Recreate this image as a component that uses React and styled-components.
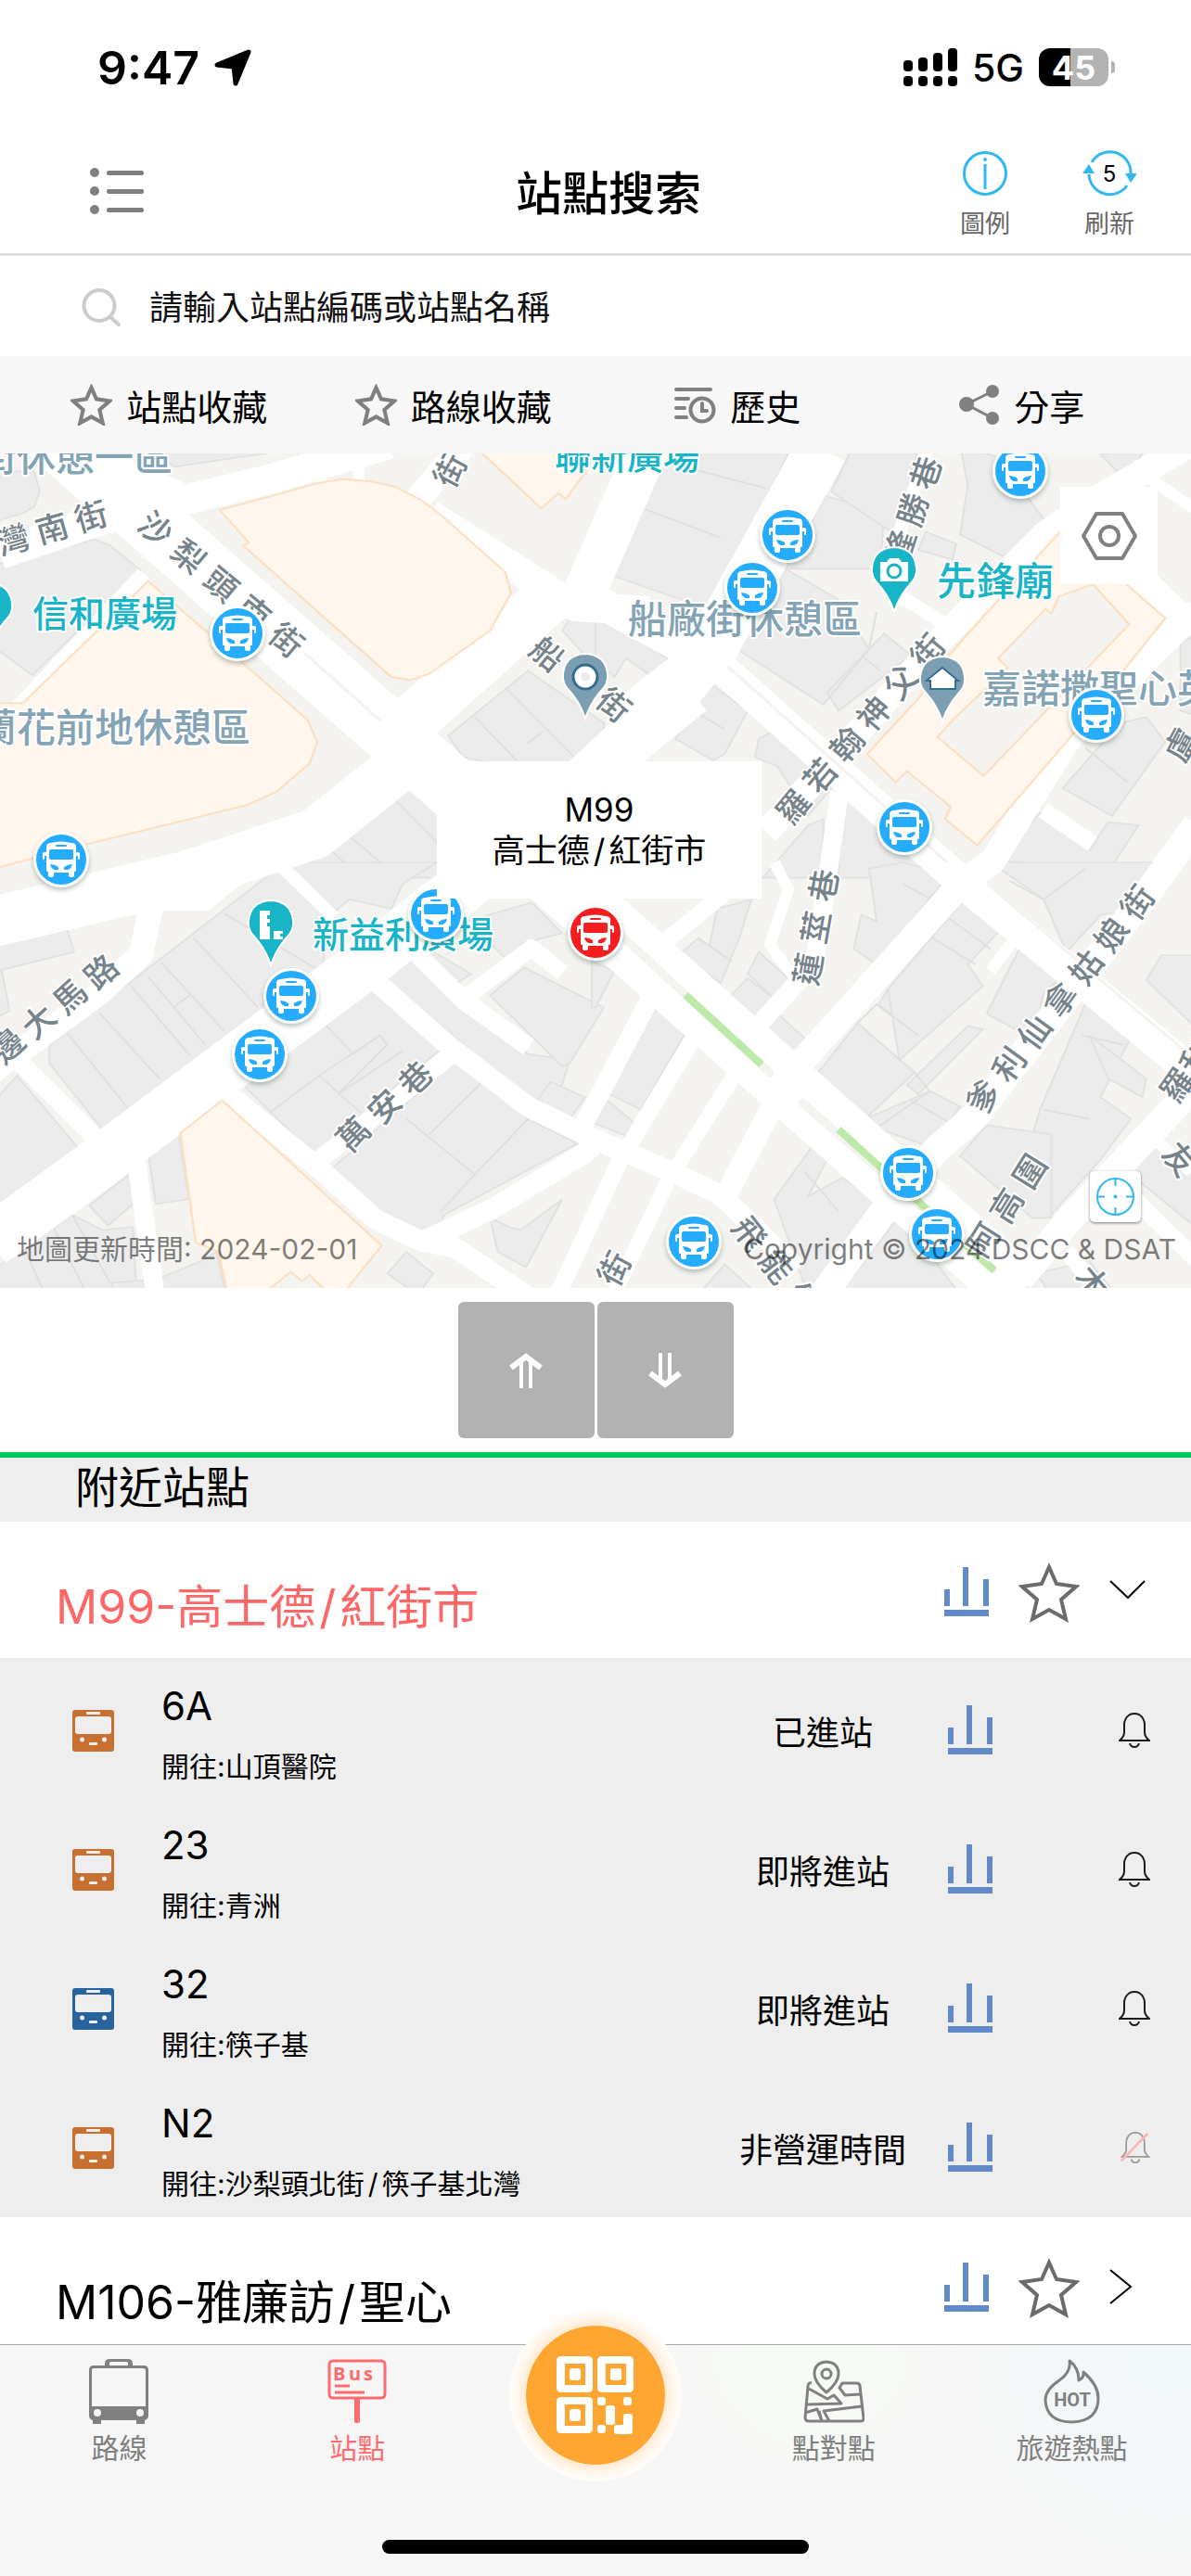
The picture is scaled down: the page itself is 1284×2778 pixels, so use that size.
import React, { Component } from 'react';
import styled, { createGlobalStyle } from 'styled-components';

const GlobalStyle = createGlobalStyle`
  * {
    box-sizing: border-box;
  }

  body {
    margin: 0;
    background: #fff;
    color: #000;
    font-family: Inter, 'Noto Sans CJK TC', sans-serif;
  }

  button {
    padding: 0;
    border: 0;
    background: none;
    color: inherit;
    font: inherit;
    cursor: pointer;
  }

  svg {
    display: block;
    flex: none;
  }
`;

const Page = styled.div`
  display: flex;
  flex-direction: column;
  height: 100vh;
`;

const Content = styled.main`
  flex: 1;
  min-height: 0;
  overflow: auto;
  scrollbar-width: none;
`;

const StatusBar = styled.div`
  display: flex;
  align-items: center;
  justify-content: space-between;
  height: 145px;
  padding: 0 82px 0 105px;
`;

const StatusGroup = styled.div`
  display: flex;
  align-items: center;
  gap: 16px;
`;

const Time = styled.span`
  font-size: 50px;
  font-weight: 600;
`;

const Network = styled.span`
  font-size: 41px;
  font-weight: 500;
`;

const BatteryWrap = styled.div`
  display: flex;
  align-items: center;
  gap: 3px;
`;

const Battery = styled.div`
  display: flex;
  align-items: center;
  justify-content: center;
  width: 75px;
  height: 41px;
  border-radius: 12px;
  background: linear-gradient(90deg, #000 45%, #b3b3b3 45%);
  color: #fff;
  font-size: 36px;
  font-weight: 700;
`;

const BatteryTip = styled.div`
  width: 4px;
  height: 13px;
  border-radius: 0 4px 4px 0;
  background: #b3b3b3;
`;

const Header = styled.header`
  display: grid;
  grid-template-columns: 1fr auto 1fr;
  align-items: center;
  height: 131px;
  padding: 0 48px 0 76px;
  border-bottom: 3px solid #dedede;
`;

const MenuButton = styled.button`
  justify-self: start;
  padding: 0 20px 6px;
`;

const Title = styled.h1`
  margin: 0;
  font-size: 50px;
  font-weight: 500;
  line-height: 60px;
`;

const HeaderActions = styled.div`
  display: flex;
  justify-content: flex-end;
  gap: 54px;
  padding-top: 6px;
`;

const HeaderButton = styled.button`
  display: flex;
  flex-direction: column;
  align-items: center;
  gap: 10px;
  width: 80px;
  color: #666;
  font-size: 27px;
  line-height: 40px;
`;

const Search = styled.label`
  display: flex;
  align-items: center;
  gap: 30px;
  height: 108px;
  padding: 4px 88px 0;
`;

const SearchInput = styled.input`
  flex: 1;
  padding: 0;
  border: 0;
  outline: 0;
  background: none;
  color: #000;
  font: 36px/54px Inter, 'Noto Sans CJK TC', sans-serif;

  &::placeholder {
    color: #111;
    opacity: 1;
  }
`;

const QuickBar = styled.nav`
  display: grid;
  grid-template-columns: repeat(4, 1fr);
  height: 105px;
  padding: 0 29px;
  background: #f7f7f7;
`;

const QuickButton = styled.button`
  display: flex;
  align-items: center;
  justify-content: center;
  gap: 15px;
  font-size: 38px;
`;

const MapArea = styled.section`
  position: relative;
  aspect-ratio: 1284 / 900;
  overflow: hidden;
  background: #f4f3ef;
`;

const MapDrawing = styled.svg`
  width: 100%;
  height: 100%;
`;

const MapText = styled.text`
  font-family: 'Noto Sans CJK TC', sans-serif;
  font-size: ${({ $size }) => $size}px;
  font-weight: 500;
  text-anchor: ${({ $middle }) => ($middle ? 'middle' : 'start')};
  fill: ${({ $color }) => $color};
  stroke: #fff;
  stroke-width: 4px;
  stroke-linejoin: round;
  paint-order: stroke;
`;

const Marker = styled.button`
  position: absolute;
  display: flex;
  align-items: center;
  justify-content: center;
  width: 60px;
  height: 60px;
  border: 3px solid #fff;
  border-radius: 50%;
  background: currentColor;
  box-shadow: 0 3px 5px rgba(60, 90, 70, 0.35);
  color: ${({ $current }) => ($current ? '#f51d1d' : '#25acff')};
  transform: translate(-50%, -50%);
`;

const Popup = styled.div`
  position: absolute;
  top: 332px;
  left: 50%;
  display: flex;
  flex-direction: column;
  justify-content: center;
  width: 350px;
  height: 148px;
  margin-left: -171px;
  background: #fff;
  font-size: 35px;
  line-height: 44px;
  text-align: center;
`;

const SettingsButton = styled.button`
  position: absolute;
  top: 36px;
  right: 36px;
  display: flex;
  align-items: center;
  justify-content: center;
  width: 105px;
  height: 105px;
  background: #fff;
`;

const LocateButton = styled.button`
  position: absolute;
  right: 54px;
  bottom: 71px;
  display: flex;
  align-items: center;
  justify-content: center;
  width: 55px;
  height: 55px;
  border-radius: 5px;
  background: #fff;
  box-shadow: 0 1px 3px rgba(0, 0, 0, 0.5);
`;

const MapCaption = styled.div`
  position: absolute;
  right: 16px;
  bottom: 22px;
  left: 18px;
  display: flex;
  justify-content: space-between;
  color: rgba(0, 0, 0, 0.5);
  font-size: 30px;
  line-height: 40px;
`;

const Resizer = styled.div`
  display: flex;
  justify-content: center;
  gap: 3px;
  padding: 15px 0;
  border-bottom: 6px solid #00c85c;
`;

const ResizeButton = styled.button`
  display: flex;
  align-items: center;
  justify-content: center;
  width: 147px;
  height: 147px;
  border-radius: 6px;
  background: #b2b2b2;
`;

const SectionTitle = styled.h2`
  margin: 0;
  padding: 0 81px 5px;
  background: #eee;
  font-size: 47px;
  font-weight: 400;
  line-height: 64px;
`;

const StationRow = styled.div`
  display: flex;
  align-items: center;
  height: 147px;
  padding: 4px 48px 0 60px;
`;

const StationName = styled.h3`
  flex: 1;
  margin: 0;
  padding-top: 34px;
  color: ${({ $active }) => ($active ? '#ff6666' : '#000')};
  font-size: 50px;
  font-weight: 400;
  line-height: 75px;
`;

const Slash = styled.span`
  padding: 0 4px;
`;

const StationActions = styled.div`
  display: flex;
  align-items: center;
  gap: 32px;
`;

const RouteList = styled.ul`
  margin: 0;
  padding: 3px 0 0;
  background: #eee;
  list-style: none;
`;

const RouteRow = styled.li`
  display: grid;
  grid-template-columns: 96px 1fr 230px 52px 150px;
  align-items: center;
  gap: 18px;
  height: 150px;
  padding: 0 44px 0 60px;
`;

const RouteIcon = styled.span`
  padding-left: 18px;
`;

const RouteInfo = styled.div`
  padding-top: 14px;
`;

const RouteNumber = styled.div`
  font-size: 42px;
  line-height: 64px;
`;

const RouteDirection = styled.div`
  font-size: 30px;
  line-height: 66px;
`;

const RouteStatus = styled.div`
  font-size: 36px;
  text-align: center;
  white-space: nowrap;
`;

const IconButton = styled.button`
  display: flex;
  align-items: center;
  justify-content: ${({ $end }) => ($end ? 'flex-end' : 'center')};
`;

const TabBar = styled.nav`
  position: relative;
  display: grid;
  grid-template-columns: repeat(5, 1fr);
  align-items: start;
  height: 250px;
  padding-top: 15px;
  border-top: 1px solid #aaa;
  background: radial-gradient(circle at 68% 0, #f6fbf4, transparent 20%),
    radial-gradient(circle at 98% 5%, #f1f7fa, transparent 20%), #f6f6f6;
`;

const Tab = styled.a`
  display: flex;
  flex-direction: column;
  align-items: center;
  gap: 4px;
  color: ${({ $active }) => ($active ? '#ff6a6c' : '#808080')};
  font-size: 30px;
  line-height: 44px;
  text-decoration: none;
`;

const ScanButton = styled.button`
  display: flex;
  align-items: center;
  justify-content: center;
  justify-self: center;
  width: 186px;
  height: 186px;
  margin-top: -54px;
  border-radius: 50%;
  background: radial-gradient(
    closest-side,
    #ffa532 80%,
    #ffebd3 81%,
    #fff8f0 92%,
    #fffcf9 100%
  );
`;

const HomeIndicator = styled.div`
  position: absolute;
  bottom: 24px;
  left: 50%;
  width: 460px;
  height: 15px;
  border-radius: 8px;
  background: #000;
  transform: translateX(-50%);
`;

const TEAL = '#18b4c8';
const SLATE = '#84a4b6';
const STREET = '#76838a';

// [x, y, current]
const MARKERS = [
  [256, 194],
  [66, 438],
  [849, 88],
  [811, 145],
  [1100, 19],
  [1182, 282],
  [975, 403],
  [470, 497],
  [314, 585],
  [280, 648],
  [979, 776],
  [1010, 842],
  [748, 850],
  [642, 517, true],
];

// [points, width]
const ROADS = [
  ['40,-34 450,327 739,584 1100,905', 66],
  ['110,10 200,50 290,28 420,-10', 32],
  ['0,108 100,74 150,60', 34],
  ['156,131 25,271 -10,300', 20],
  ['305,40 295,20', 12],
  ['347,30 343,10', 12],
  ['388,35 385,0', 12],
  ['450,50 500,-10', 28],
  ['463,66 620,165 700,170', 32],
  ['700,-10 630,150', 46],
  ['420,310 600,148', 56],
  ['620,146 700,190 781,234 1035,461 1284,666', 34],
  ['886,-5 770,205 700,290 560,420 470,490 393,551 240,665 100,770 -10,850', 56],
  ['740,250 690,290', 70],
  ['440,330 340,410 200,456 -10,506', 54],
  ['165,480 152,540 110,580 -10,668', 26],
  ['165,480 220,480 270,440', 26],
  ['10,645 110,745', 20],
  ['147,765 168,910', 20],
  ['245,690 345,772 405,826 455,850 490,856 570,910', 22],
  ['455,850 530,815 630,755 650,735', 22],
  ['400,565 485,640 570,705 642,740 725,775 777,800 860,880', 22],
  ['340,765 487,648', 20],
  ['450,540 500,590 570,640', 20],
  ['298,440 360,500', 14],
  ['504,585 573,533 606,560', 18],
  ['705,580 650,685 620,740', 20],
  ['755,618 667,765 600,910', 18],
  ['793,668 720,785 660,910', 16],
  ['840,690 780,805', 24],
  ['865,655 1040,460 1070,440 1150,310 1250,208 1290,170', 28],
  ['1290,-14 1180,50 1125,88 1010,205 890,340 826,408', 28],
  ['1000,-5 968,90 965,150 1020,185', 14],
  ['905,365 893,450 878,550 810,625', 20],
  ['1290,400 1240,470 1051,715 1010,750 957,811 885,910', 30],
  ['1290,680 1154,825 1100,890', 30],
  ['1224,805 1290,870', 18],
  ['1240,735 1284,775', 12],
  ['1150,860 1190,910', 18],
  ['1180,90 1284,190', 34],
  ['1230,20 1290,62', 12],
  ['1125,385 1178,421', 18],
  ['1068,558 1100,515', 12],
  ['780,475 720,524', 18],
  ['835,441 850,470 830,530 860,570', 12],
];

// Buildings and lots are kept per quarter of the map.
const QUARTERS = [
  {
    at: 'translate(0 -9) scale(0.4095 0.3333)',
    lots: [
      '-40,835 60,835 390,440 540,600 700,770 810,890 835,960 815,1030 730,1120 650,1165 200,1300 0,1365 -40,1365',
      '578,210 730,160 830,125 900,110 980,118 1040,135 1105,175 1150,215 1330,410 1345,480 1290,600 1130,740 1080,760 1030,750 640,325 655,315',
      '1270,27 1425,205 1470,155 1490,175 1545,80 1568,0 1270,0',
    ],
    yards: [],
    buildings: [
      '-20,85 90,85 105,150 90,200 60,220 -20,250',
      '370,0 700,0 700,27 460,70',
      '-20,390 250,305 290,325 370,405 85,745 -20,650',
      '1180,940 1390,730 1590,900 1590,1100 1220,1010',
      '1520,520 1600,590 1600,760 1480,600',
      '760,1330 1040,1070 1200,1200 1200,1400 800,1400',
    ],
    lines: [
      '1335,790 1520,1020',
      '1250,880 1360,1020',
      '1390,965 1430,925',
      '1010,1110 1170,1310',
      '880,1225 1050,1400',
      '835,1270 950,1400',
    ],
  },
  {
    at: 'translate(642 -9) scale(0.4095 0.3333)',
    lots: [
      '1230,270 1500,560 1240,960 1005,1295 920,1210 935,1170 820,1055 790,1090 715,1000 850,820 930,680',
    ],
    yards: [
      '1220,490 1310,450 1405,580 1022,1070 900,945 940,890 1085,720 1060,690 1185,530 1200,545',
    ],
    buildings: [
      '170,0 520,0 355,400 320,540 15,410',
      '605,165 760,215 750,400 500,400',
      '500,400 640,500 720,660 600,840 360,650',
      '680,0 850,0 840,60 790,290 620,150',
      '960,0 1060,40 1180,240 1090,370 960,290 980,130',
      '870,280 950,320 940,370 850,340',
      '0,540 190,690 150,750 80,690 50,750 0,700',
      '300,770 400,860 340,1000 310,1020 210,950',
      '430,950 460,930 640,1080 560,1200 480,1040 420,1010',
      '760,610 830,680 640,860 610,800',
      '640,1260 660,1130 880,1330 840,1400 640,1400',
      '600,1210 560,1230 440,1400 600,1400',
      '1330,30 1450,0 1400,120',
      '1230,1110 1380,900 1450,880 1500,960 1360,1200',
      '1060,1340 1170,1190 1300,1310 1350,1220 1430,1230 1340,1400',
      '1540,640 1600,600 1600,880 1540,860',
    ],
    lines: [
      '200,60 450,140',
      '125,205 330,300',
      '740,540 720,660 600,840',
      '700,680 750,730',
      '260,860 340,920',
      '1290,980 1400,1090',
    ],
  },
  {
    at: 'translate(0 441) scale(0.4095 0.3333)',
    lots: [
      '475,875 585,770 1005,1240 900,1400 850,1377 815,1335 795,1355 765,1325 690,1400 600,1400 575,1260 515,1230',
    ],
    yards: [],
    buildings: [
      '-20,185 160,150 195,290 -20,355',
      '-20,360 5,350 25,480 -20,510',
      '130,590 730,20 860,170 850,340 340,800 270,865 130,650',
      '-20,780 45,690 210,930 -20,1120',
      '235,1110 340,1010 355,1100 285,1175',
      '-20,1320 190,1140 270,1190 350,1180 360,1400 -20,1400',
      '390,940 470,880 497,1090 410,1105',
      '295,1360 410,1350 530,1290 570,1260 595,1400 295,1400',
      '640,720 965,405 1160,605 825,945',
      '865,1000 1200,640 1390,830 1520,910 1170,1140 1150,1200 1080,1200 980,1130',
      '1000,360 1080,310 1250,480 1390,620 1500,640 1480,720 1400,780',
      '1290,430 1380,340 1590,470 1500,650 1480,660',
      '1100,260 1240,360 1200,395',
      '1290,1150 1340,1180 1370,1190 1480,1090 1385,1310 1310,1260',
      '1020,1330 1070,1260 1140,1330 1100,1400',
      '740,0 1000,0 1150,0 1060,70 1030,150 920,120 880,160',
      '1230,190 1400,130 1480,230 1380,260 1330,310',
      '1415,770 1450,710 1540,760 1500,830',
    ],
    lines: [
      '590,165 840,350',
      '510,245 680,470',
      '425,325 590,545',
      '460,465 500,430',
      '390,370 540,590',
      '345,400 500,625',
      '260,485 420,700',
      '175,550 340,800',
      '710,810 840,690 950,810',
      '840,690 1000,560 1020,590 890,750',
      '850,515 930,620 1000,560',
      '890,750 1060,610',
      '1070,830 1250,1010 1390,830',
      '1130,880 1270,710',
      '1250,1010 1160,1130',
      '60,1240 120,1400',
      '140,1180 230,1400',
      '190,1140 290,1360',
    ],
  },
  {
    at: 'translate(642 441) scale(0.4095 0.3333)',
    lots: [],
    yards: [],
    buildings: [
      '320,150 410,120 380,240 330,390 220,300 270,245 300,270',
      '430,290 530,400 470,440 400,360',
      '350,440 400,375 480,450 400,510',
      '425,535 480,490 560,580 520,640',
      '155,460 240,545 120,800 20,740',
      '20,760 105,845 80,885 -10,840',
      '-10,320 50,350 0,470 -10,470',
      '580,690 690,520 840,680 710,830',
      '710,830 880,740 960,790 880,920 740,860',
      '745,460 770,410 870,500 830,540',
      '770,410 980,105 1080,200 980,330 1020,400 800,640',
      '720,20 810,0 930,40 740,330 680,280 700,170 740,190',
      '1040,0 1480,0 1380,160 1330,170 1240,290 1180,120',
      '1600,40 1570,300 1490,300 1450,380 1600,560',
      '1030,490 1130,245 1250,350 1180,420 1150,570',
      '1170,800 1300,430 1420,540 1330,760 1410,830 1330,960 1200,1140 1100,1100',
      '1300,560 1450,700 1440,760 1350,700',
      '960,950 1030,850 1200,880 1200,1150 1150,1150',
      '980,530 1020,540 850,750 820,720',
      '1160,1330 1300,1290 1370,1400 1200,1400',
      '1390,990 1460,900 1600,990 1600,1200',
      '470,1090 570,920 610,960 560,1080 650,1020 760,1110 680,1250 600,1400 560,1400',
      '640,1400 790,1160 900,1300 960,1400',
      '270,1400 340,1300 430,1400',
    ],
    lines: [
      '880,240 1000,330',
      '930,180 1040,280',
      '690,520 740,460 850,560',
      '830,770 930,840',
      '840,680 880,740 740,860',
      '810,70 900,130',
      '1180,120 1290,20',
      '1280,560 1390,590',
      '1180,800 1300,830',
      '1090,60 1180,120',
      '270,245 360,320',
      '550,1000 640,1130',
    ],
  },
];

// [name, first glyph centre, last glyph centre, rotation]
const STREETS = [
  ['沙梨頭南街', [168, 81], [309, 201], 40],
  ['灣南街', [14, 93], [98, 68], -16],
  ['街', [485, 18], [485, 18], -62],
  ['船街', [590, 216], [662, 271], 40],
  ['隆勝巷', [970, 100], [998, 21], -72],
  ['羅若翰神父街', [855, 381], [1000, 213], -50],
  ['蓮莖巷', [871, 556], [888, 466], -80],
  ['爹利仙拿姑娘街', [1060, 694], [1226, 484], -54],
  ['阿高圍', [1060, 848], [1110, 774], -58],
  ['飛能便', [808, 841], [866, 912], 52],
  ['街', [662, 879], [662, 879], -62],
  ['羅利', [1269, 681], [1290, 652], -55],
  ['友', [1272, 761], [1272, 761], 50],
  ['木', [1178, 894], [1178, 894], 50],
  ['盧', [1273, 314], [1273, 314], -62],
  ['萬安巷', [381, 734], [448, 674], -45],
  ['邊大馬路', [8, 639], [109, 559], -42],
];

// [name, x, centre y, size, colour]
const PLACES = [
  ['街休憩一區', -24, 4, 42, SLATE],
  ['信和廣場', 35, 172, 39, TEAL],
  ['蘭花前地休憩區', -24, 296, 42, SLATE],
  ['聯新廣場', 598, 2, 39, TEAL],
  ['船廠街休憩區', 677, 179, 42, SLATE],
  ['先鋒廟', 1010, 138, 42, TEAL],
  ['嘉諾撒聖心英', 1059, 254, 42, SLATE],
  ['新益利廣場', 337, 518, 39, TEAL],
];

const ROUTES = [
  { number: '6A', to: '山頂醫院', status: '已進站', color: '#c77032' },
  { number: '23', to: '青洲', status: '即將進站', color: '#c77032' },
  { number: '32', to: '筷子基', status: '即將進站', color: '#27649e' },
  {
    number: 'N2',
    to: '沙梨頭北街/筷子基北灣',
    status: '非營運時間',
    color: '#c77032',
    muted: true,
  },
];

const withSlash = (name) =>
  name.split('/').map((part, i) => (
    <React.Fragment key={part}>
      {i > 0 && <Slash>/</Slash>}
      {part}
    </React.Fragment>
  ));

const LocationIcon = () => (
  <svg width="40" height="40" viewBox="0 0 40 40">
    <path
      d="M3 17 37 3 23 37 21 19Z"
      fill="#000"
      stroke="#000"
      strokeWidth="5"
      strokeLinejoin="round"
    />
  </svg>
);

const SignalIcon = () => (
  <svg width="58" height="41" viewBox="0 0 58 41">
    {[13, 10, 5, 0].map((top, i) => (
      <g key={top}>
        <rect x={i * 16} y={top} width="10" height={25 - top} rx="4" />
        <rect x={i * 16} y="30" width="10" height="11" rx="4" />
      </g>
    ))}
  </svg>
);

const MenuIcon = () => (
  <svg width="60" height="52" viewBox="0 0 60 52">
    {[6, 26, 46].map((y) => (
      <g key={y} fill="#808080">
        <circle cx="6" cy={y} r="5" />
        <rect x="19" y={y - 2} width="40" height="5" rx="2" />
      </g>
    ))}
  </svg>
);

const LegendIcon = () => (
  <svg width="50" height="50" viewBox="0 0 50 50">
    <circle cx="25" cy="25" r="22.5" fill="none" stroke="#31b8ef" strokeWidth="3" />
    <path d="M25 15v27" stroke="#31b8ef" strokeWidth="3" />
    <circle cx="25" cy="10" r="2" fill="#31b8ef" />
  </svg>
);

const RefreshIcon = () => (
  <svg width="58" height="50" viewBox="0 0 58 50">
    <g fill="none" stroke="#31b8ef" strokeWidth="3">
      <path d="M10 13a22.5 22.5 0 0 1 42 12" />
      <path d="M48 38a22.5 22.5 0 0 1-41-12" />
    </g>
    <path d="M46 25h13l-7 10ZM0 25h13L7 15Z" fill="#31b8ef" />
    <text x="29" y="34" textAnchor="middle" fontSize="24" fill="#000">
      5
    </text>
  </svg>
);

const SearchIcon = () => (
  <svg width="43" height="42" viewBox="0 0 43 42">
    <g fill="none" stroke="#ccc" strokeWidth="4" strokeLinecap="round">
      <circle cx="19" cy="18.5" r="16.5" />
      <path d="m31 31 9 8" />
    </g>
  </svg>
);

const StarIcon = ({ size = 66, color = '#6b6b6b', stroke = 4 }) => (
  <svg width={size} height={size} viewBox="0 0 66 66">
    <path
      d="m33 6 8 18 21 3-16 14 5 21-18-10-18 10 5-21L4 27l21-3Z"
      fill="none"
      stroke={color}
      strokeWidth={stroke}
    />
  </svg>
);

const HistoryIcon = () => (
  <svg width="45" height="40" viewBox="0 0 45 40">
    <g fill="none" stroke="#808080" strokeWidth="4" strokeLinecap="round">
      <path d="M2 3h37M2 13h13M2 23h9M2 33h11" />
      <circle cx="30" cy="25" r="12.5" strokeWidth="4" />
      <path d="M30 18v8h5" strokeWidth="4" />
    </g>
  </svg>
);

const ShareIcon = () => (
  <svg width="44" height="43" viewBox="0 0 44 43">
    <path d="M36 7 8 21l28 15" fill="none" stroke="#808080" strokeWidth="3" />
    <g fill="#808080">
      <circle cx="36" cy="7" r="7" />
      <circle cx="8" cy="21" r="8" />
      <circle cx="36" cy="36" r="7" />
    </g>
  </svg>
);

const BusGlyph = () => (
  <svg width="42" height="42" viewBox="0 0 42 42">
    <path
      d="M5 7q0-4 5-4 11-3 22 0 5 0 5 4v6h2q2 0 2 2v5q0 1-2 1v-4h-2v16q0 1-2 1v4q0 2-2 2h-2q-2 0-2-2v-3H13v3q0 2-2 2H9q-2 0-2-2v-4q-2 0-2-1V17H3v4q-2 0-2-1v-5q0-2 2-2h2Z"
      fill="#fff"
    />
    <g fill="currentColor">
      <rect x="15" y="5" width="12" height="2" rx="1" />
      <rect x="8" y="10" width="26" height="11" rx="2" />
      <path d="M9 26q5 0 9 3v3h-4q-4-1-5-6ZM33 26q-5 0-9 3v3h4q4-1 5-6Z" />
    </g>
  </svg>
);

const HexIcon = () => (
  <svg width="60" height="54" viewBox="0 0 60 54">
    <g fill="none" stroke="#808080" strokeWidth="4" strokeLinejoin="round">
      <path d="M16 3h28l14 24-14 24H16L2 27Z" />
      <circle cx="30" cy="27" r="10" />
    </g>
  </svg>
);

const LocateIcon = () => (
  <svg width="43" height="43" viewBox="0 0 43 43">
    <g fill="none" stroke="#31b8ef" strokeWidth="2">
      <circle cx="21.5" cy="21.5" r="19.5" />
      <path d="M21.5 2v8M21.5 33v8M2 21.5h8M33 21.5h8" />
    </g>
    <circle cx="21.5" cy="21.5" r="2" fill="#31b8ef" />
  </svg>
);

const DoubleArrowIcon = ({ down }) => (
  <svg width="38" height="40" viewBox="0 0 38 40">
    <g
      fill="none"
      stroke="#fff"
      strokeWidth="4"
      transform={down ? 'rotate(180 19 20)' : undefined}
    >
      <path d="M14 39V10M24 39V10" />
      <path d="M3 17 19 5l16 12" strokeWidth="6" />
    </g>
  </svg>
);

const ChartIcon = () => (
  <svg width="48" height="54" viewBox="0 0 48 54" fill="#628ac8">
    <rect x="0" y="24" width="6" height="18" />
    <rect x="20" y="0" width="6" height="42" />
    <rect x="42" y="13" width="6" height="29" />
    <rect x="0" y="46" width="48" height="7" />
  </svg>
);

const ChevronIcon = ({ open }) => (
  <svg width="40" height="40" viewBox="0 0 40 40">
    <path
      d={open ? 'm1 8 19 18L38 8' : 'M1 1l22 18L1 37'}
      fill="none"
      stroke="#000"
      strokeWidth="2"
    />
  </svg>
);

const RouteBusIcon = ({ color }) => (
  <svg width="45" height="45" viewBox="0 0 45 45">
    <rect width="45" height="45" rx="3" fill={color} />
    <g fill="#eee">
      <rect x="15" y="2" width="15" height="3" rx="1" />
      <rect x="3" y="7" width="39" height="19" rx="3" />
      <circle cx="10.5" cy="32" r="2.5" />
      <circle cx="34.5" cy="32" r="2.5" />
      <rect x="18" y="35" width="9" height="3" rx="1" />
    </g>
  </svg>
);

const BellIcon = ({ muted }) => (
  <svg width={muted ? 32 : 34} height={muted ? 34 : 38} viewBox="0 0 34 38">
    <g fill="none" stroke={muted ? '#999' : '#1c1c1c'} strokeWidth="2">
      <path d="M1 30q5-4 5-9v-8q0-7 6-11 5-2 10 0 6 4 6 11v8q0 5 5 9Z" />
      <path d="M12 33q1 4 5 4t5-4" />
      {muted && <path d="M0 35 32 2" stroke="#ffb3b5" strokeWidth="3" />}
    </g>
  </svg>
);

const BusTabIcon = () => (
  <svg width="64" height="70" viewBox="0 0 64 70">
    <path
      d="M0 12q0-5 5-5h12V5q0-5 5-5h20q5 0 5 5v2h12q5 0 5 5v49q0 4-4 5v4H51v-4H13v4H4v-4q-4-1-4-5Zm22-5h20V4q0-1-2-1H24q-2 0-2 1ZM4 10q-1 1-1 3v38h58V13q0-3-3-3H6Z"
      fill="#808080"
      fillRule="evenodd"
    />
    <circle cx="9" cy="58" r="4" fill="#f6f6f6" />
    <circle cx="55" cy="58" r="4" fill="#f6f6f6" />
  </svg>
);

const StopTabIcon = () => (
  <svg width="64" height="70" viewBox="0 0 64 70">
    <rect x="2" y="2" width="60" height="40" rx="4" fill="none" stroke="#ff6a6c" strokeWidth="3" />
    <rect x="29" y="42" width="6" height="27" rx="2" fill="#ff6a6c" />
    <path d="M8 29h16M8 36h32" stroke="#ff6a6c" strokeWidth="3" />
    <g fill="#ff6a6c" fontFamily="Open Sans, sans-serif" fontSize="20" fontWeight="700">
      <text x="6" y="23">B</text>
      <text x="23" y="23">u</text>
      <text x="39" y="23">s</text>
    </g>
  </svg>
);

const QrIcon = () => (
  <svg width="84" height="84" viewBox="0 0 84 84" fill="#fff">
    {[
      [0, 0],
      [44, 0],
      [0, 44],
    ].map(([x, y]) => (
      <g key={`${x}-${y}`} transform={`translate(${x} ${y})`}>
        <path
          d="M5 0h29q5 0 5 5v29q0 5-5 5H5q-5 0-5-5V5q0-5 5-5Zm4 8v23h22V8Z"
          fillRule="evenodd"
        />
        <rect x="14" y="13" width="12" height="13" rx="3" />
      </g>
    ))}
    <rect x="44" y="44" width="9" height="9" rx="3" />
    <rect x="72" y="44" width="9" height="9" rx="3" />
    <rect x="53" y="53" width="10" height="21" rx="3" />
    <rect x="44" y="74" width="9" height="9" rx="3" />
    <path d="M72 65q0-3 3-3h4q3 0 3 3v16q0 3-3 3H65q-3 0-3-3v-4q0-3 3-3h7Z" />
  </svg>
);

const MapTabIcon = () => (
  <svg width="66" height="70" viewBox="0 0 66 70">
    <g fill="none" stroke="#808080" strokeWidth="3" strokeLinejoin="round">
      <path d="M25 36Q12 25 12 16q0-12 13-13 13 1 13 13 0 9-13 20Z" />
      <circle cx="25" cy="16" r="5" />
      <path d="M9 26q-4-1-4 4L2 63q0 4 4 4h56q3 0 3-3l-4-35q0-3-4-3H42l-3 5 6 8 16-1" />
      <path d="m6 32 20 11 7-4 8 9-37 1M2 58l13-4 5 13M28 67l-6-11 41-5M20 67l-3-11" />
    </g>
  </svg>
);

const HotTabIcon = () => (
  <svg width="64" height="70" viewBox="0 0 64 70">
    <path
      d="M29 2q2 12-11 21Q3 33 3 44q1 24 29 24 28-1 28-26 0-14-16-28 1 6-5 9Q39 9 29 2Z"
      fill="none"
      stroke="#808080"
      strokeWidth="3"
      strokeLinejoin="round"
    />
    <text
      x="32"
      y="51"
      textAnchor="middle"
      fontFamily="Liberation Sans Narrow, Roboto, sans-serif"
      fontSize="20"
      fontWeight="700"
      fill="#808080"
    >
      HOT
    </text>
  </svg>
);

const Pin = ({ x, y, color, children }) => (
  <g transform={`translate(${x} ${y})`}>
    <path
      d="M0 70Q-6 52-18 39-25 32-24 22-22 1 0 0 22 1 24 22 25 32 18 39 6 52 0 70Z"
      fill={color}
      stroke="#fff"
      strokeWidth="2"
    />
    {children}
  </g>
);

const StreetLabel = ({ name, from, to, angle }) => {
  const steps = Math.max(name.length - 1, 1);
  return [...name].map((char, i) => {
    const x = from[0] + ((to[0] - from[0]) * i) / steps;
    const y = from[1] + ((to[1] - from[1]) * i) / steps;
    return (
      <MapText
        key={char}
        $size={35}
        $color={STREET}
        $middle
        transform={`translate(${x} ${y}) rotate(${angle})`}
        y="13"
      >
        {char}
      </MapText>
    );
  });
};

const CityMap = () => (
  <MapDrawing viewBox="0 0 1284 900" preserveAspectRatio="xMidYMid slice">
    {QUARTERS.map(({ at, buildings, lines }) => (
      <g key={at} transform={at} strokeWidth="5">
        {buildings.map((points) => (
          <polygon key={points} points={points} fill="#ececec" stroke="#e1e1e1" />
        ))}
        {lines.map((points) => (
          <polyline key={points} points={points} fill="none" stroke="#dfdfdf" />
        ))}
      </g>
    ))}
    <g fill="none" stroke="#fff" strokeLinejoin="round">
      {ROADS.map(([points, width]) => (
        <polyline key={points} points={points} strokeWidth={width} />
      ))}
    </g>
    <g fill="none" stroke="#f4f3ef" strokeLinecap="round">
      <path d="M328 215 410 288" strokeWidth="3" />
      <path d="M785 230 1020 440" strokeWidth="3" />
      <path d="M1065 465 1284 650" strokeWidth="3" />
      <path d="M670 520 830 668M865 700 1070 880" strokeWidth="9" />
    </g>
    <path
      d="M739 584 821 659M904 729 1072 881"
      stroke="#bdeaa9"
      strokeWidth="8"
      fill="none"
    />
    {QUARTERS.map(({ at, lots, yards }) => (
      <g key={at} transform={at} stroke="#fde0c2" strokeWidth="6">
        {lots.map((points) => (
          <polygon key={points} points={points} fill="#fff6ed" />
        ))}
        {yards.map((points) => (
          <polygon key={points} points={points} fill="#f4f3ef" />
        ))}
      </g>
    ))}
    {STREETS.map(([name, from, to, angle]) => (
      <StreetLabel key={`${name}${from}`} name={name} from={from} to={to} angle={angle} />
    ))}
    {PLACES.map(([name, x, y, size, color]) => (
      <MapText key={name} x={x} y={y + 15} $size={size} $color={color}>
        {name}
      </MapText>
    ))}
    <Pin x={-11} y={140} color={TEAL} />
    <Pin x={964} y={101} color={TEAL}>
      <path d="M-15 16h7l3-4H5l3 4h7v21h-30Z" fill="#fff" />
      <circle cy="26" r="7" fill="#fff" stroke={TEAL} strokeWidth="3" />
    </Pin>
    <Pin x={1016} y={219} color="#7b9eb3">
      <path d="M-15 24 0 12l17 14h-3v9h-27v-9h-4Z" fill="#fff" stroke="#356d90" strokeWidth="2" />
    </Pin>
    <Pin x={631} y={216} color="#7b9eb3">
      <circle cy="25" r="13" fill="#fff" stroke="#356d90" strokeWidth="3" />
      <circle cy="25" r="5" fill="#ececec" />
    </Pin>
    <Pin x={292} y={482} color={TEAL}>
      <path
        d="M-12 11H-1v5h-3v4h3v4h-3v4h3v14h-11ZM3 33h10v3h-3v3h3v3H3Z"
        fill="#fff"
      />
    </Pin>
  </MapDrawing>
);

const StationActionButtons = ({ open }) => (
  <StationActions>
    <IconButton aria-label="統計">
      <ChartIcon />
    </IconButton>
    <IconButton aria-label="收藏">
      <StarIcon />
    </IconButton>
    <IconButton aria-label={open ? '收起' : '展開'}>
      <ChevronIcon open={open} />
    </IconButton>
  </StationActions>
);

class App extends Component {
  constructor(props) {
    super(props);
    this.state = { keyword: '' };
  }

  render() {
    const { keyword } = this.state;

    return (
      <>
        <GlobalStyle />
        <Page>
          <Content>
            <StatusBar>
              <StatusGroup>
                <Time>9:47</Time>
                <LocationIcon />
              </StatusGroup>
              <StatusGroup>
                <SignalIcon />
                <Network>5G</Network>
                <BatteryWrap>
                  <Battery>45</Battery>
                  <BatteryTip />
                </BatteryWrap>
              </StatusGroup>
            </StatusBar>

            <Header>
              <MenuButton aria-label="選單">
                <MenuIcon />
              </MenuButton>
              <Title>站點搜索</Title>
              <HeaderActions>
                <HeaderButton>
                  <LegendIcon />
                  圖例
                </HeaderButton>
                <HeaderButton>
                  <RefreshIcon />
                  刷新
                </HeaderButton>
              </HeaderActions>
            </Header>

            <Search>
              <SearchIcon />
              <SearchInput
                value={keyword}
                placeholder="請輸入站點編碼或站點名稱"
                onChange={(e) => this.setState({ keyword: e.target.value })}
              />
            </Search>

            <QuickBar>
              <QuickButton>
                <StarIcon size={45} color="#808080" stroke={6} />
                站點收藏
              </QuickButton>
              <QuickButton>
                <StarIcon size={45} color="#808080" stroke={6} />
                路線收藏
              </QuickButton>
              <QuickButton>
                <HistoryIcon />
                歷史
              </QuickButton>
              <QuickButton>
                <ShareIcon />
                分享
              </QuickButton>
            </QuickBar>

            <MapArea>
              <CityMap />
              {MARKERS.map(([x, y, current]) => (
                <Marker
                  key={`${x}-${y}`}
                  $current={current}
                  aria-label="巴士站"
                  style={{
                    left: `${(x / 1284) * 100}%`,
                    top: `${(y / 900) * 100}%`,
                  }}
                >
                  <BusGlyph />
                </Marker>
              ))}
              <Popup>
                <div>M99</div>
                <div>{withSlash('高士德/紅街市')}</div>
              </Popup>
              <SettingsButton aria-label="設定">
                <HexIcon />
              </SettingsButton>
              <LocateButton aria-label="定位">
                <LocateIcon />
              </LocateButton>
              <MapCaption>
                <span>地圖更新時間: 2024-02-01</span>
                <span>Copyright © 2024 DSCC &amp; DSAT</span>
              </MapCaption>
            </MapArea>

            <Resizer>
              <ResizeButton aria-label="向上">
                <DoubleArrowIcon />
              </ResizeButton>
              <ResizeButton aria-label="向下">
                <DoubleArrowIcon down />
              </ResizeButton>
            </Resizer>

            <SectionTitle>附近站點</SectionTitle>
            <StationRow>
              <StationName $active>{withSlash('M99-高士德/紅街市')}</StationName>
              <StationActionButtons open />
            </StationRow>
            <RouteList>
              {ROUTES.map(({ number, to, status, color, muted }) => (
                <RouteRow key={number}>
                  <RouteIcon>
                    <RouteBusIcon color={color} />
                  </RouteIcon>
                  <RouteInfo>
                    <RouteNumber>{number}</RouteNumber>
                    <RouteDirection>開往:{withSlash(to)}</RouteDirection>
                  </RouteInfo>
                  <RouteStatus>{status}</RouteStatus>
                  <IconButton aria-label="統計">
                    <ChartIcon />
                  </IconButton>
                  <IconButton $end aria-label="提醒">
                    <BellIcon muted={muted} />
                  </IconButton>
                </RouteRow>
              ))}
            </RouteList>
            <StationRow>
              <StationName>{withSlash('M106-雅廉訪/聖心')}</StationName>
              <StationActionButtons />
            </StationRow>
          </Content>

          <TabBar>
            <Tab href="#routes">
              <BusTabIcon />
              路線
            </Tab>
            <Tab href="#stops" $active>
              <StopTabIcon />
              站點
            </Tab>
            <ScanButton aria-label="掃碼">
              <QrIcon />
            </ScanButton>
            <Tab href="#planner">
              <MapTabIcon />
              點對點
            </Tab>
            <Tab href="#travel">
              <HotTabIcon />
              旅遊熱點
            </Tab>
            <HomeIndicator />
          </TabBar>
        </Page>
      </>
    );
  }
}

export default App;
